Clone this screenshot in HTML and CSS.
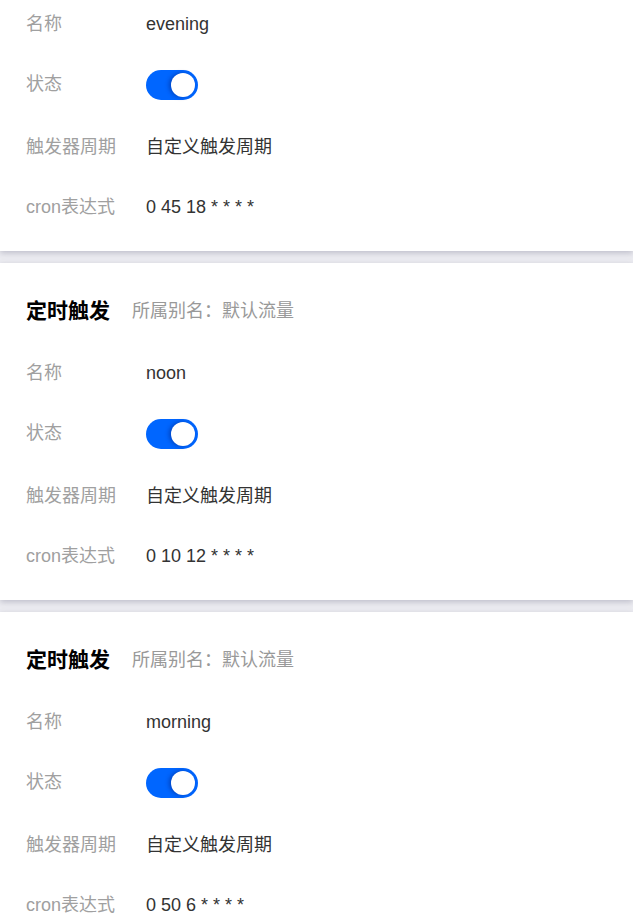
FILE: index.html
```html
<!DOCTYPE html>
<html lang="zh-CN">
<head>
<meta charset="utf-8">
<title>定时触发</title>
<link rel="stylesheet" href="styles.css">
</head>
<body>
<div class="viewport">
  <div class="list">
    <section class="card card-continued">
      <div class="row row-name"><span class="label">名称</span><span class="value">evening</span></div>
      <div class="row row-switch"><span class="label">状态</span><span class="switch on"><span class="knob"></span></span></div>
      <div class="row"><span class="label">触发器周期</span><span class="value">自定义触发周期</span></div>
      <div class="row"><span class="label">cron表达式</span><span class="value">0 45 18 * * * *</span></div>
    </section>
    <section class="card">
      <div class="card-head"><span class="title">定时触发</span><span class="sub">所属别名：默认流量</span></div>
      <div class="row row-name"><span class="label">名称</span><span class="value">noon</span></div>
      <div class="row row-switch"><span class="label">状态</span><span class="switch on"><span class="knob"></span></span></div>
      <div class="row"><span class="label">触发器周期</span><span class="value">自定义触发周期</span></div>
      <div class="row"><span class="label">cron表达式</span><span class="value">0 10 12 * * * *</span></div>
    </section>
    <section class="card">
      <div class="card-head"><span class="title">定时触发</span><span class="sub">所属别名：默认流量</span></div>
      <div class="row row-name"><span class="label">名称</span><span class="value">morning</span></div>
      <div class="row row-switch"><span class="label">状态</span><span class="switch on"><span class="knob"></span></span></div>
      <div class="row"><span class="label">触发器周期</span><span class="value">自定义触发周期</span></div>
      <div class="row"><span class="label">cron表达式</span><span class="value">0 50 6 * * * *</span></div>
    </section>
  </div>
</div>
</body>
</html>
```
FILE: styles.css
```css
html, body {
  margin: 0;
  padding: 0;
  background: #ececf1;
}
body {
  font-family: "Liberation Sans", Arial, "Noto Sans CJK SC", sans-serif;
  font-size: 18px;
  color: #333;
}
.viewport {
  height: 918px;
  overflow: hidden;
}
/* page is scrolled: the first card continues from above the fold */
.list {
  margin-top: -7px;
  display: flex;
  flex-direction: column;
  gap: 12px;
}
.card {
  background: #fff;
  padding: 0 26px 14px;
  box-shadow: 0 2px 6px rgba(70, 70, 100, 0.28);
}
.card-head {
  display: flex;
  align-items: center;
  height: 22px;
  line-height: 22px;
  padding: 35px 0 22px;
}
.title {
  font-family: "Noto Sans CJK SC", sans-serif;
  font-weight: 700;
  font-size: 21px;
  color: #000;
}
.sub {
  margin-left: 22px;
  font-family: "Noto Sans CJK SC", sans-serif;
  font-size: 18px;
  color: #999;
}
.row {
  display: flex;
  align-items: flex-start;
  padding: 19px 0;
  line-height: 22px;
}
.row-name {
  padding: 20px 0 18px;
}
.row-switch {
  padding: 17px 0;
}
.row-switch .label {
  margin-top: 3px;
}
.label {
  width: 120px;
  flex: none;
  color: #a0a0a0;
}
.value {
  color: #333;
}
.switch {
  display: flex;
  align-items: center;
  justify-content: flex-end;
  box-sizing: border-box;
  width: 52px;
  height: 30px;
  padding: 3px;
  border-radius: 15px;
  background: #0066ff;
}
.knob {
  width: 24px;
  height: 24px;
  border-radius: 50%;
  background: #fff;
  box-shadow: -2px 0 4px rgba(0, 30, 120, 0.45);
}
```
